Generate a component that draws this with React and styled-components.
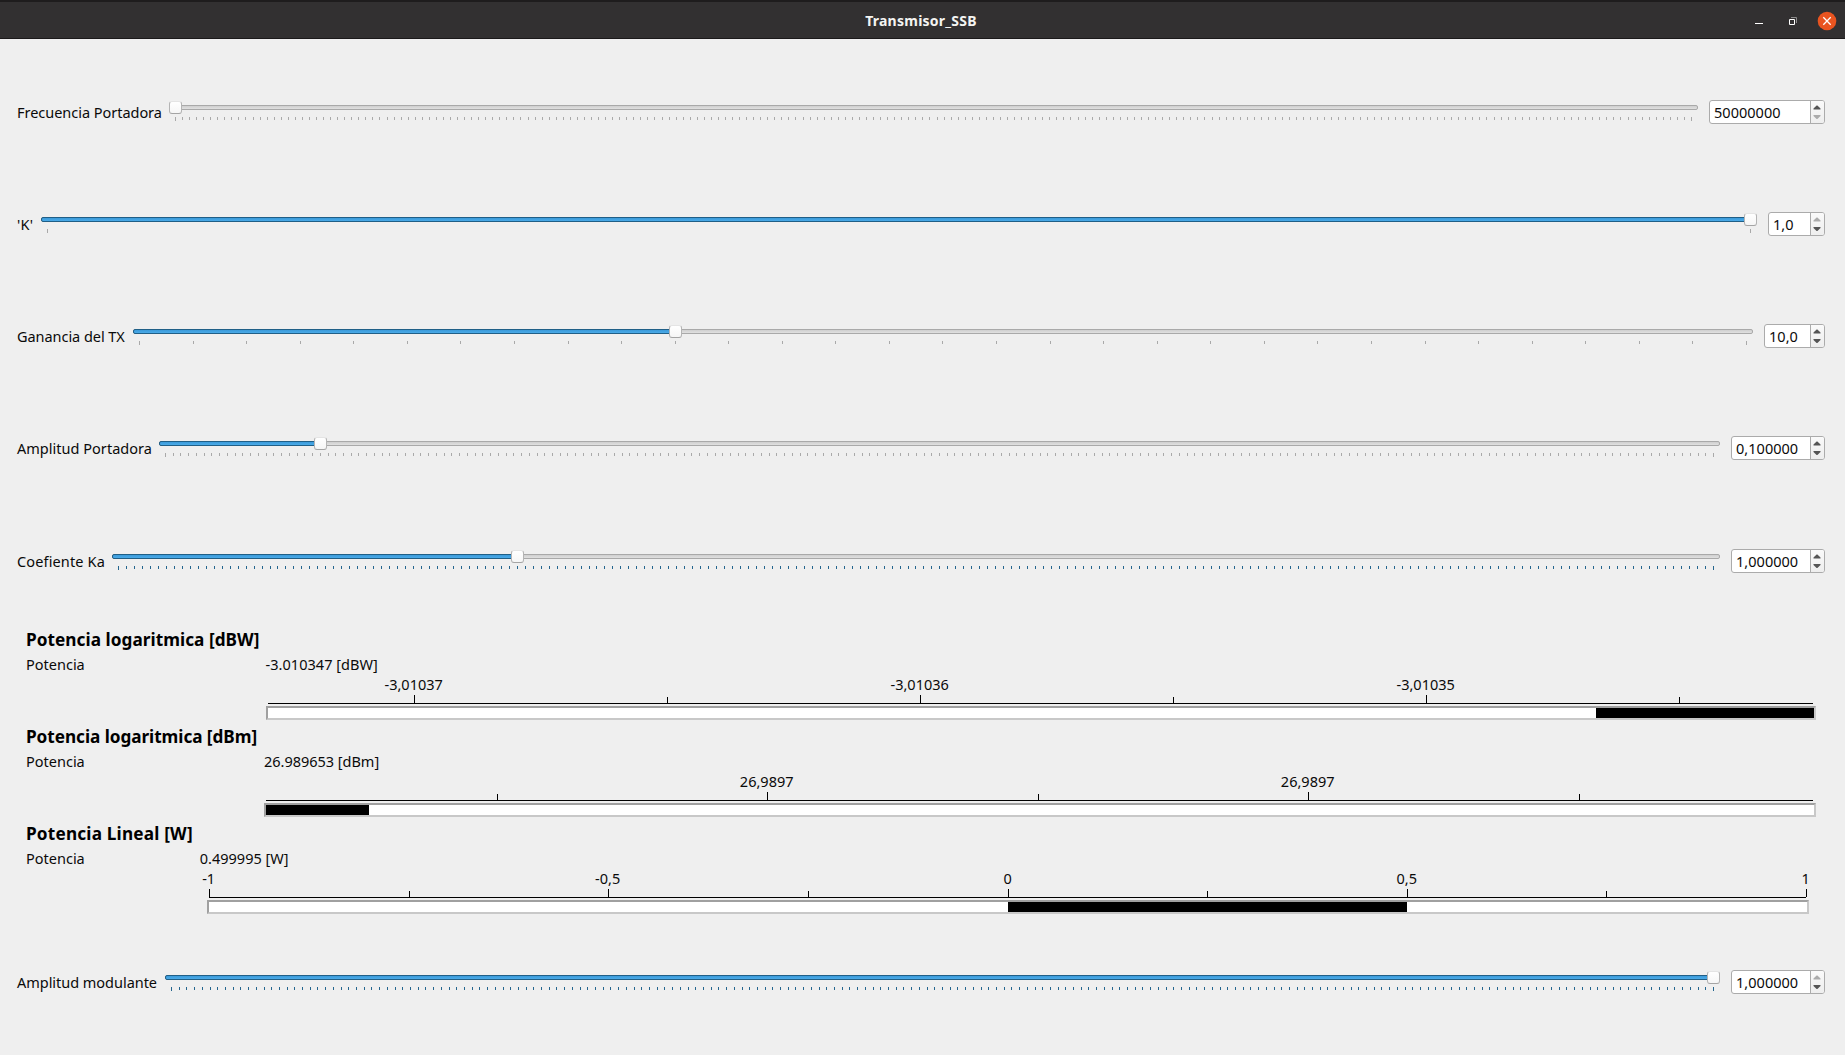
import React from "react";
import styled, { createGlobalStyle } from "styled-components";

const GlobalStyle = createGlobalStyle`
  * { box-sizing: border-box; }
  body { margin: 0; background: #efefef; overflow: hidden; }
`;

const Window = styled.div`
  display: flex;
  flex-direction: column;
  width: 1845px;
  height: 1055px;
  background: #efefef;
  color: #0a0a0a;
  font: 14.5px/18px "Noto Sans", "Open Sans", sans-serif;
  white-space: pre;
`;

const TitleBar = styled.header`
  display: grid;
  grid-template-columns: 1fr auto 1fr;
  align-items: center;
  height: 39px;
  padding: 1px 8px 0 4px;
  background: #323031;
  border-top: 2px solid #1e1c1d;
  border-bottom: 1px solid #1b191a;
`;

const WindowTitle = styled.h1`
  grid-column: 2;
  margin: 0;
  padding-left: 1px;
  font-size: 14px;
  line-height: 20px;
  font-weight: 700;
  letter-spacing: 0.25px;
  color: #f4f4f2;
`;

const WindowButtons = styled.div`
  display: flex;
  justify-content: flex-end;
  align-items: center;
  height: 20px;
`;

const WindowIcon = styled.svg`
  display: block;
  width: 20px;
  height: 20px;
  margin-left: 14px;
`;

const Controls = styled.main`
  display: flex;
  flex-direction: column;
  padding: 61px 20px 0 17px;
`;

const Row = styled.div`
  display: flex;
  height: 24px;
  margin-top: ${(p) => p.$before || 0}px;
  margin-bottom: ${(p) => p.$after}px;
`;

const Label = styled.label`
  flex: none;
  width: ${(p) => p.$width}px;
  padding-top: 3px;
  letter-spacing: ${(p) => p.$spacing || 0}px;
`;

const SliderBox = styled.div`
  position: relative;
  flex: 1;
  padding-top: 5px;
`;

const Groove = styled.div`
  height: 5px;
  border: 1px solid #a9a9a9;
  border-radius: 2px;
  background: linear-gradient(#cfcfcf, #e0e0e0);
`;

const GrooveFill = styled.div`
  height: 5px;
  margin: -1px;
  border: 1px solid #205f87;
  border-radius: 2px;
  background: linear-gradient(#3b9ad9, #4aaae8);
`;

const Handle = styled.div`
  position: absolute;
  top: 1px;
  width: 13px;
  height: 13px;
  margin-left: -6px;
  border: 1px solid #b4b4b4;
  border-top-color: #e4e4e4;
  border-bottom-color: #a4a4a4;
  border-radius: 3px;
  background: linear-gradient(#ffffff, #f6f6f6);
`;

const TickSvg = styled.svg`
  display: block;
  width: 100%;
  height: 4px;
  margin-top: 7px;
`;

const Spin = styled.div`
  display: flex;
  flex: none;
  width: ${(p) => p.$width}px;
  height: 24px;
  margin-left: 11px;
  border: 1px solid #ababab;
  border-radius: 3px;
  background: #ffffff;
  overflow: hidden;
`;

const SpinValue = styled.span`
  flex: 1;
  padding: 2px 0 0 4px;
  letter-spacing: 0.03px;
`;

const SpinButtons = styled.svg`
  width: 14px;
  height: 22px;
  border-left: 1px solid #ababab;
  background: linear-gradient(#fafafa, #eeeeee);
`;

const Meter = styled.section`
  display: flex;
  flex-direction: column;
  height: 97px;
  padding-left: 9px;
`;

const MeterTitle = styled.h2`
  margin: 0;
  height: 29px;
  font-size: 17.2px;
  line-height: 27px;
  font-weight: 700;
  color: #000;
  letter-spacing: ${(p) => p.$spacing || 0}px;
`;

const MeterHead = styled.div`
  display: flex;
  height: 20px;
`;

const MeterName = styled.span`
  width: ${(p) => p.$width}px;
`;

const MeterValue = styled.span`
  letter-spacing: ${(p) => p.$spacing || 0}px;
`;

const Scale = styled.div`
  width: ${(p) => p.$width}px;
  margin-left: ${(p) => p.$left}px;
`;

const ScaleLabels = styled.div`
  position: relative;
  height: 20px;
`;

const ScaleLabel = styled.span`
  position: absolute;
  transform: translateX(-50%);
`;

const ScaleTicks = styled.svg`
  display: block;
  width: 100%;
  height: 9px;
  margin-bottom: 2px;
`;

const Bar = styled.div`
  height: 14px;
  border: 2px solid #c8c8c8;
  border-top-color: #a0a0a0;
  border-left-color: #a0a0a0;
  background: #ffffff;
`;

const BarFill = styled.div`
  height: 10px;
  background: #000000;
`;

function Ticks({ span, count, color }) {
  const ticks = [];
  for (let i = 0; i <= count; i++) {
    const end = i === 0 || i === count;
    ticks.push(
      <rect key={i} x={6 + Math.floor((i * span) / count + 0.48)} y="0" width="1" height={end ? 4 : 3} fill={color} />
    );
  }
  return <TickSvg shapeRendering="crispEdges">{ticks}</TickSvg>;
}

function SliderRow({ label, labelWidth, labelSpacing, span, count, at, blue, value, valueWidth, min, max, before, after }) {
  return (
    <Row $before={before} $after={after}>
      <Label $width={labelWidth} $spacing={labelSpacing}>{label}</Label>
      <SliderBox>
        <Groove>{at > 0 && <GrooveFill style={{ width: at === span ? span + 13 : at + 7 }} />}</Groove>
        <Ticks span={span} count={count} color={blue ? "#24658e" : "#a9a9a9"} />
        <Handle style={{ left: at + 6 }} />
      </SliderBox>
      <Spin $width={valueWidth}>
        <SpinValue>{value}</SpinValue>
        <SpinButtons viewBox="0 0 13 22">
          <path d="M2.5 8.5 V7.6 L5.6 4.6 H6.4 L9.5 7.6 V8.5Z" fill={max ? "#ababab" : "#555"} />
          <path d="M2.5 14 V14.9 L5.6 18 H6.4 L9.5 14.9 V14Z" fill={min ? "#ababab" : "#555"} />
        </SpinButtons>
      </Spin>
    </Row>
  );
}

function PowerMeter({ title, titleSpacing, nameWidth, value, valueSpacing, left, width, line, ticks, fill }) {
  return (
    <Meter>
      <MeterTitle $spacing={titleSpacing}>{title}</MeterTitle>
      <MeterHead>
        <MeterName $width={nameWidth}>Potencia</MeterName>
        <MeterValue $spacing={valueSpacing}>{value}</MeterValue>
      </MeterHead>
      <Scale $left={left} $width={width}>
        <ScaleLabels>
          {ticks.filter((t) => t[1]).map(([x, text]) => (
            <ScaleLabel key={x} style={{ left: x - 0.3 }}>{text}</ScaleLabel>
          ))}
        </ScaleLabels>
        <ScaleTicks shapeRendering="crispEdges">
          <rect x={line[0]} y="8" width={line[1] - line[0]} height="1" />
          {ticks.map(([x, text]) => (
            <rect key={x} x={x} y={text ? 0 : 2} width="1" height={text ? 8 : 6} />
          ))}
        </ScaleTicks>
        <Bar>
          <BarFill style={{ marginLeft: fill[0], width: fill[1] }} />
        </Bar>
      </Scale>
    </Meter>
  );
}

export default function App() {
  return (
    <Window>
      <GlobalStyle />
      <TitleBar>
        <WindowTitle>Transmisor_SSB</WindowTitle>
        <WindowButtons>
          <WindowIcon viewBox="0 0 20 20"><path d="M6 12.5h8" stroke="#fff" /></WindowIcon>
          <WindowIcon viewBox="0 0 20 20" fill="none">
            <path d="M8 6.5h5.5v5.5" stroke="#8d8c8c" />
            <path d="M6.5 8.5h5v5h-5z" stroke="#fff" />
          </WindowIcon>
          <WindowIcon viewBox="0 0 20 20">
            <circle cx="10" cy="10" r="9.3" fill="#e95420" />
            <path d="M6.3 6.3l7.4 7.4M13.7 6.3l-7.4 7.4" stroke="#fff" strokeWidth="1.3" />
          </WindowIcon>
        </WindowButtons>
      </TitleBar>
      <Controls>
        <SliderRow label="Frecuencia Portadora" labelWidth={152} labelSpacing={-0.03} span={1516} count={215} at={0} value="50000000" valueWidth={116} min after={88} />
        <SliderRow label="'K'" labelWidth={24} labelSpacing={0.3} span={1703} count={1} at={1703} value="1,0" valueWidth={57} max after={88} />
        <SliderRow label="Ganancia del TX" labelWidth={116} labelSpacing={-0.05} span={1607} count={30} at={536} value="10,0" valueWidth={61} after={88} />
        <SliderRow label="Amplitud Portadora" labelWidth={142} labelSpacing={0.02} span={1548} count={200} at={155} value="0,100000" valueWidth={94} after={89} />
        <SliderRow label="Coefiente Ka" labelWidth={95} labelSpacing={0.14} span={1595} count={200} at={399} blue value="1,000000" valueWidth={94} after={53} />
        <PowerMeter title="Potencia logaritmica [dBW]" titleSpacing={0.05} nameWidth={239.6} value="-3.010347 [dBW]" valueSpacing={0.03} left={240} width={1550} line={[2, 1547]}
          ticks={[[148, "-3,01037"], [401], [654, "-3,01036"], [907], [1160, "-3,01035"], [1413]]} fill={[1328, 218]} />
        <PowerMeter title="Potencia logaritmica [dBm]" titleSpacing={-0.05} nameWidth={238} value="26.989653 [dBm]" valueSpacing={-0.02} left={238} width={1552} line={[2, 1549]}
          ticks={[[233], [503, "26,9897"], [774], [1044, "26,9897"], [1315]]} fill={[0, 103]} />
        <PowerMeter title="Potencia Lineal [W]" titleSpacing={0.19} nameWidth={173.8} value="0.499995 [W]" left={181} width={1602} line={[2, 1599]}
          ticks={[[2, "-1"], [202], [401, "-0,5"], [601], [801, "0"], [1000], [1200, "0,5"], [1399], [1599, "1"]]} fill={[799, 399]} />
        <SliderRow label="Amplitud modulante" labelWidth={148} labelSpacing={-0.03} span={1542} count={200} at={1542} blue value="1,000000" valueWidth={94} max before={53} after={0} />
      </Controls>
    </Window>
  );
}
